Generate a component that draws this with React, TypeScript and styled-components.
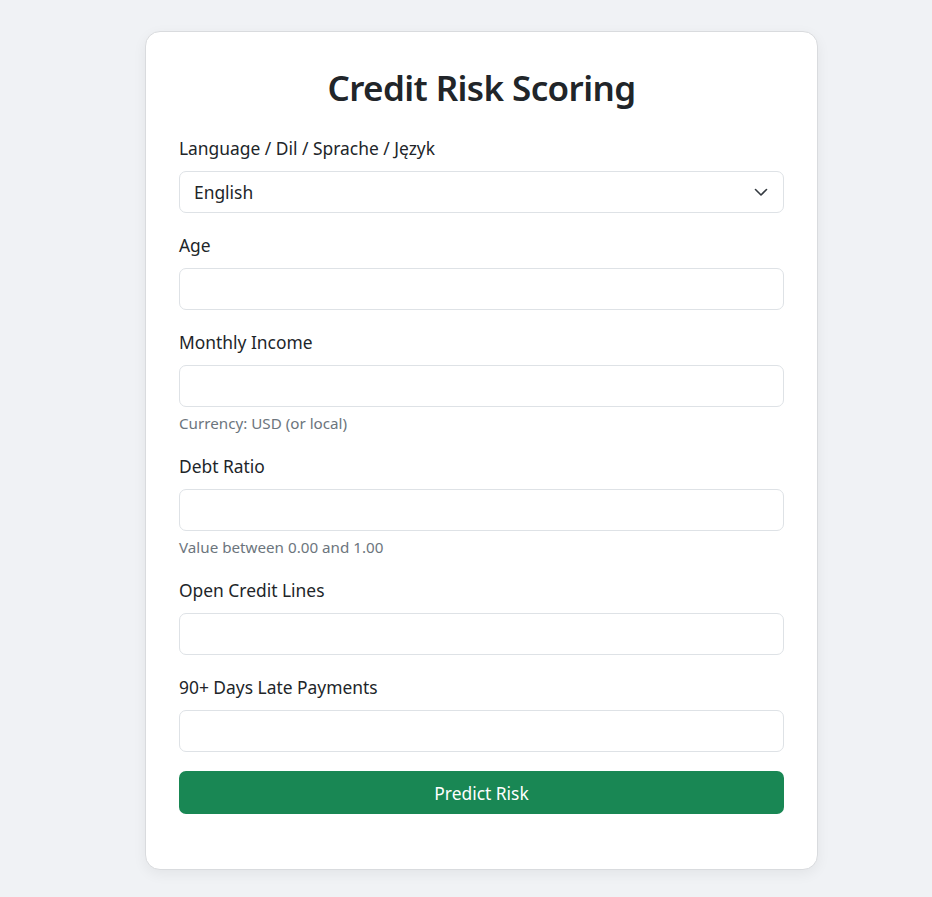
import styled, { createGlobalStyle } from "styled-components";

const GlobalStyle = createGlobalStyle`
  * { box-sizing: border-box; }
  body {
    margin: 0;
    background: #f0f2f5;
    font-family: "Noto Sans", "Open Sans", sans-serif;
    color: #212529;
  }
`;

const Page = styled.div`
  min-height: 897px;
  padding: 31px 0 28px 145px;
`;

const Card = styled.div`
  width: 673px;
  background: #fff;
  border: 1px solid #d9dbde;
  border-radius: 15px;
  box-shadow: 0 4px 14px rgba(0, 0, 0, 0.06);
  padding: 35px 33px 36px 33px;
`;

const Title = styled.h1`
  margin: 0 0 26px;
  text-align: center;
  font-size: 35px;
  line-height: 42px;
  font-weight: 600;
  letter-spacing: -0.6px;
  color: #212529;
`;

const Group = styled.div`
  margin-bottom: 19px;
`;

const Label = styled.label`
  display: block;
  font-size: 17.4px;
  line-height: 27px;
  margin-bottom: 9px;
  color: #212529;
`;

const fieldBase = `
  display: block;
  width: 100%;
  height: 42px;
  border: 1px solid #dee2e6;
  border-radius: 7px;
  background: #fff;
  font-family: "Noto Sans", "Open Sans", sans-serif;
  font-size: 17.4px;
  color: #212529;
  padding: 0 14px;
  outline: none;
`;

const Input = styled.input`
  ${fieldBase}
`;

const SelectWrap = styled.div`
  position: relative;
`;

const Select = styled.select`
  ${fieldBase}
  appearance: none;
  -webkit-appearance: none;
  padding-right: 40px;
`;

const Chevron = styled.svg`
  position: absolute;
  right: 15px;
  top: 50%;
  width: 16px;
  height: 16px;
  margin-top: -8px;
  pointer-events: none;
`;

const Help = styled.div`
  margin-top: 5px;
  margin-bottom: -1px;
  font-size: 15.2px;
  line-height: 23px;
  color: #6c757d;
`;

const Button = styled.button`
  display: block;
  width: 100%;
  height: 43px;
  border: none;
  border-radius: 7px;
  background: #198754;
  color: #fff;
  font-family: "Noto Sans", "Open Sans", sans-serif;
  font-size: 17.4px;
  cursor: pointer;
`;

const fields = [
  { id: "age", label: "Age" },
  { id: "income", label: "Monthly Income", help: "Currency: USD (or local)" },
  { id: "debt", label: "Debt Ratio", help: "Value between 0.00 and 1.00" },
  { id: "lines", label: "Open Credit Lines" },
  { id: "late", label: "90+ Days Late Payments" },
];

export default function App() {
  return (
    <>
      <GlobalStyle />
      <Page>
        <Card>
          <Title>Credit Risk Scoring</Title>
          <Group>
            <Label htmlFor="lang">Language / Dil / Sprache / Język</Label>
            <SelectWrap>
              <Select id="lang" defaultValue="en">
                <option value="en">English</option>
                <option value="tr">Türkçe</option>
                <option value="de">Deutsch</option>
                <option value="pl">Polski</option>
              </Select>
              <Chevron viewBox="0 0 16 16">
                <path
                  d="m2.5 5.5 5.5 5.5 5.5-5.5"
                  fill="none"
                  stroke="#343a40"
                  strokeWidth="1.6"
                  strokeLinecap="round"
                  strokeLinejoin="round"
                />
              </Chevron>
            </SelectWrap>
          </Group>
          {fields.map((f) => (
            <Group key={f.id}>
              <Label htmlFor={f.id}>{f.label}</Label>
              <Input id={f.id} type="number" />
              {f.help && <Help>{f.help}</Help>}
            </Group>
          ))}
          <Group>
            <Button type="button">Predict Risk</Button>
          </Group>
        </Card>
      </Page>
    </>
  );
}
